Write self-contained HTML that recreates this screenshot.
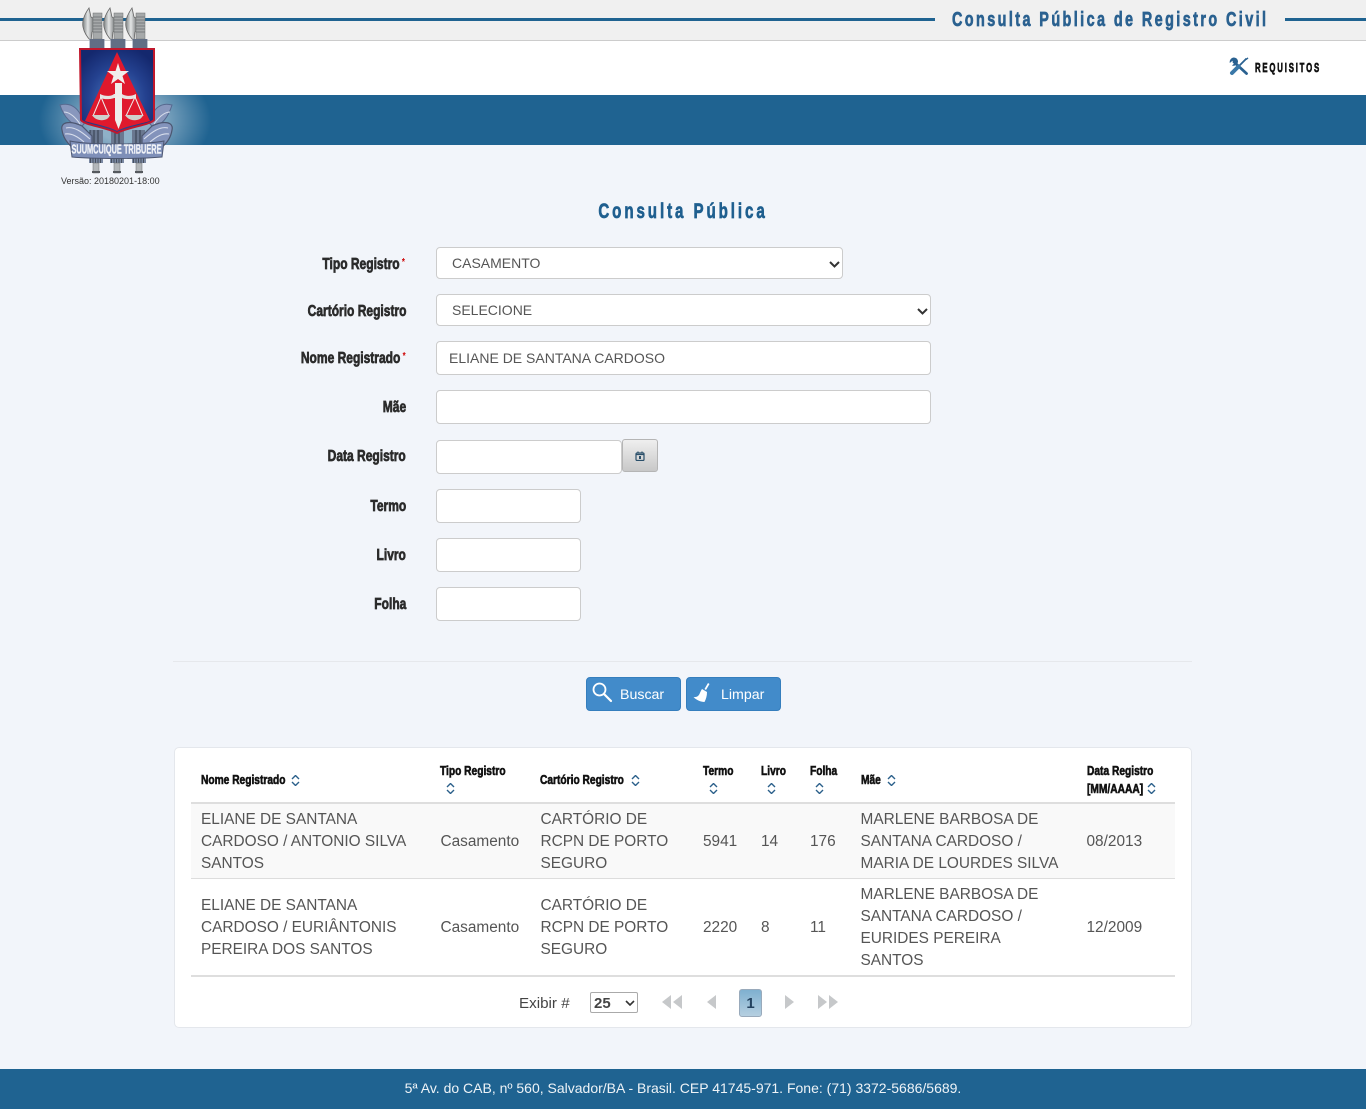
<!DOCTYPE html>
<html lang="pt-BR"><head><meta charset="utf-8"><title>Consulta Pública de Registro Civil</title>
<style>
*{box-sizing:border-box}
html,body{margin:0;padding:0}
body{width:1366px;height:1109px;position:relative;overflow:hidden;background:#f2f5fa;font-family:"Liberation Sans",sans-serif;color:#555;font-size:16px}
.a{position:absolute}
.h{font-family:"Liberation Sans",sans-serif;font-weight:700;-webkit-text-stroke:.7px currentColor;white-space:nowrap}
.lb{position:absolute;right:960px;font-size:15.5px;color:#2b2b2b;line-height:18px;text-align:right;transform:scaleX(.775);transform-origin:100% 50%}
.lb i{position:absolute;font-style:normal;color:#c00;font-size:10px;left:100%;margin-left:3px;top:-2px;-webkit-text-stroke:0}
.lb.s{right:966px}
.in{position:absolute;left:436px;background:#fff;border:1px solid #ccc;border-radius:4px;font-size:14px;color:#555;line-height:33px;padding-left:12px;white-space:nowrap}
.chev{position:absolute;top:13px;width:11px;height:7px}
.th{position:absolute;font-size:13px;line-height:18px;color:#111;-webkit-text-stroke:.6px #111;transform:scaleX(.785);transform-origin:0 50%}
.t{position:absolute;font-size:15.4px;line-height:22px;color:#555;white-space:nowrap}
.btn{position:absolute;top:677px;height:34px;width:95px;border-radius:4px;background:#428bca;border:1px solid #357ebd;color:#fff;font-size:14.2px;line-height:34px}
</style></head><body>

<div class="a" style="left:0;top:0;width:1366px;height:41px;background:#f0f0f0;border-bottom:1px solid #ccc"></div>
<div class="a" style="left:0;top:18px;width:935px;height:3px;background:#1f6391"></div>
<div class="a" style="left:1285px;top:18px;width:81px;height:3px;background:#1f6391"></div>
<div class="a h" style="left:952px;top:9px;font-size:20px;line-height:23px;letter-spacing:3.35px;color:#2a6190;transform:scaleX(.72);transform-origin:0 50%">Consulta Pública de Registro Civil</div>

<div class="a" style="left:0;top:41px;width:1366px;height:54px;background:#fff"></div>
<div class="a" style="left:0;top:95px;width:1366px;height:50px;background:#1f6391"></div>
<div class="a" style="left:0;top:95px;width:230px;height:50px;background:radial-gradient(ellipse 86px 60px at 125px 25px,rgba(255,255,255,.5) 35%,rgba(255,255,255,0) 100%)"></div>

<svg class="a" style="left:1229px;top:57px" width="20" height="19" viewBox="0 0 20 19">
<path d="M5 5 L17.500 16.500" stroke="#2a6190" stroke-width="2.800" stroke-linecap="round"/>
<path d="M5 .5 A4.500 4.500 0 0 0 .8 6 L3.500 3.800 L5.800 6 L3 8.500 A4.500 4.500 0 0 0 9 4 A4.500 4.500 0 0 0 5 .5Z" fill="#2a6190"/>
<path d="M17.500 1.500 L10 9" stroke="#2a6190" stroke-width="1.800"/>
<path d="M18.800 .4 L19.400 1.500 L17.500 3 L16.400 2Z" fill="#2a6190"/>
<path d="M9.500 9.500 L3 16" stroke="#3a78a8" stroke-width="4" stroke-linecap="round"/>
</svg>
<div class="a h" style="left:1255px;top:60px;font-size:13px;line-height:15px;letter-spacing:3px;color:#111;transform:scaleX(.6);transform-origin:0 50%">REQUISITOS</div>

<svg class="a" style="left:55px;top:5px" width="125" height="172" viewBox="55 5 125 172">
<defs>
<radialGradient id="bl" cx=".5" cy=".6" r=".65"><stop offset="0" stop-color="#4a78c0"/><stop offset=".6" stop-color="#24418f"/><stop offset="1" stop-color="#14286e"/></radialGradient>
<linearGradient id="ax" x1="0" x2="1"><stop offset="0" stop-color="#7d8182"/><stop offset=".5" stop-color="#e4e6e6"/><stop offset="1" stop-color="#85898a"/></linearGradient>
<g id="axe">
<path d="M9 3 C4 10 2 17 3 22 C4 27 7 32 11 36 L12 27 L13 26 L13 13 L11 12Z" fill="url(#ax)" stroke="#666" stroke-width=".8"/>
<rect x="13" y="8" width="9" height="26" fill="#a6a9aa" stroke="#6e7273" stroke-width=".5"/>
<path d="M13 12h9M13 15h9M13 18h9M13 21h9M13 24h9M13 27h9" stroke="#6a6e70" stroke-width=".7"/>
<rect x="9.500" y="34" width="15" height="10" fill="#7b89a3"/>
<path d="M11 34v10M13 34v10M15 34v10M17 34v10M19 34v10M21 34v10M23 34v10" stroke="#3b4658" stroke-width=".8"/>
</g>
<g id="bot">
<rect x="0" y="0" width="14" height="6" fill="#7b89a3"/>
<path d="M1.500 0v6M4 0v6M6.500 0v6M9 0v6M11.500 0v6" stroke="#39404c" stroke-width=".8"/>
<rect x="4" y="6" width="6" height="10" fill="#b3b7ba" stroke="#6a6e70" stroke-width=".5"/>
<rect x="3" y="14" width="8" height="2" fill="#55595e"/>
</g>
</defs>
<use href="#axe" x="80" y="5"/><use href="#axe" x="101" y="5"/><use href="#axe" x="123" y="5"/>
<rect x="90" y="130" width="13" height="14" fill="#6a7890"/><rect x="111" y="130" width="13" height="14" fill="#6a7890"/><rect x="132" y="130" width="13" height="14" fill="#6a7890"/>
<path d="M90 130v14M94 130v14M98 130v14M115 130v14M119 130v14M136 130v14M140 130v14" stroke="#333c4c" stroke-width="1"/>
<use href="#bot" x="89" y="157"/><use href="#bot" x="110" y="157"/><use href="#bot" x="132" y="157"/>
<path d="M60 105 C71 102 80 108 84 124 L80 128 C72 124 64 118 60 105Z" fill="#8897bd" stroke="#56698f" stroke-width="1"/>
<path d="M172 105 C161 102 152 108 150 124 L154 128 C162 124 168 118 172 105Z" fill="#8897bd" stroke="#56698f" stroke-width="1"/>
<path d="M62 130 C60 122 70 120 82 126 L92 136 L92 144 L72 147 C66 142 63 137 62 130Z" fill="#8393bb" stroke="#4c5670" stroke-width="1.200"/>
<path d="M172 130 C174 122 164 120 152 126 L142 136 L142 144 L162 147 C168 142 171 137 172 130Z" fill="#8393bb" stroke="#4c5670" stroke-width="1.200"/>
<path d="M66 128C74 126 82 132 90 139M168 128C160 126 152 132 144 139M65 134C72 133 78 137 84 142M169 134C162 133 156 137 150 142M64 112C70 112 76 118 80 124M170 112C164 112 158 118 154 124" stroke="#d8deec" stroke-width="1.100" fill="none"/>
<path d="M70 141 C90 145 142 145 164 141 L162 157 C140 159 92 159 72 157Z" fill="#7e8fb8" stroke="#4c5670" stroke-width="1"/>
<path d="M80 49 H154 V120 C150 125 128 127 117 133 C106 127 84 125 81 120Z" fill="url(#bl)" stroke="#c0172c" stroke-width="2"/>
<path d="M117 52 L150 121 C140 124 126 126 117 131 C108 126 94 124 85 121Z" fill="#e0192d"/>
<path d="M118 63 L120.500 71 L129 71 L122.500 76 L125 84 L118 79 L111 84 L113.500 76 L107 71 L115.500 71Z" fill="#f1eeec"/>
<path d="M100 94 C106 97 112 96 114 94 H122 C125 96 130 97 136 94 V98 C130 100 124 99 122 98 H114 C112 99 106 100 100 98Z" fill="#e6e4e2"/>
<path d="M115 83 H122 V120 L118.500 129 L115 120Z" fill="#efedeb"/>
<path d="M101 97 L93 116 M101 97 L109 116 M135 97 L126 116 M135 97 L143 116" stroke="#eee" stroke-width="1"/>
<path d="M92 115 H110 C108 122 96 122 92 115Z" fill="#cfd0cc"/>
<path d="M125 115 H143 C141 122 129 122 125 115Z" fill="#cfd0cc"/>
<text x="116.500" y="153.500" text-anchor="middle" font-family="Liberation Sans,sans-serif" font-weight="700" font-size="13" fill="#f2f4f8" stroke="#e8ecf4" stroke-width=".4" textLength="90" lengthAdjust="spacingAndGlyphs">SUUMCUIQUE TRIBUERE</text>
</svg>
<div class="a" style="left:61px;top:175px;font-size:9px;line-height:12px;color:#333;white-space:nowrap">Versão: 20180201-18:00</div>

<div class="a h" style="left:0;width:1366px;top:199px;text-align:center;font-size:21px;line-height:25px;letter-spacing:4.05px;color:#1f5f8f;transform:scaleX(.72)">Consulta Pública</div>

<div class="lb h s" style="top:256px">Tipo Registro<i>*</i></div>
<div class="lb h" style="top:303px">Cartório Registro</div>
<div class="lb h s" style="top:350px">Nome Registrado<i>*</i></div>
<div class="lb h" style="top:399px">Mãe</div>
<div class="lb h" style="top:448px">Data Registro</div>
<div class="lb h" style="top:498px">Termo</div>
<div class="lb h" style="top:547px">Livro</div>
<div class="lb h" style="top:596px">Folha</div>

<div class="in" style="top:247px;width:407px;height:32px;padding-left:15px;line-height:31px">CASAMENTO
<svg class="chev" style="left:392px" viewBox="0 0 11 7"><path d="M1 1l4.500 4.500L10 1" fill="none" stroke="#333" stroke-width="2"/></svg></div>
<div class="in" style="top:294px;width:495px;height:32px;padding-left:15px;line-height:31px">SELECIONE
<svg class="chev" style="left:480px" viewBox="0 0 11 7"><path d="M1 1l4.500 4.500L10 1" fill="none" stroke="#333" stroke-width="2"/></svg></div>
<div class="in" style="top:341px;width:495px;height:34px">ELIANE DE SANTANA CARDOSO</div>
<div class="in" style="top:390px;width:495px;height:34px"></div>
<div class="in" style="top:440px;width:186px;height:34px"></div>
<div class="a" style="left:622px;top:439px;width:36px;height:33px;border:1px solid #b5b5b5;border-radius:3px;background:linear-gradient(#efefef,#c8c8c8)"></div>
<svg class="a" style="left:635px;top:451px" width="10" height="10" viewBox="0 0 10 10"><rect x="1" y="2" width="8" height="7.500" rx="1" fill="none" stroke="#2a4f6a" stroke-width="1.200"/><path d="M1 3.500h8M3 .5v2M7 .5v2" stroke="#2a4f6a" stroke-width="1.200"/><rect x="4" y="5" width="2" height="3" fill="#2a4f6a"/></svg>
<div class="in" style="top:489px;width:145px;height:34px"></div>
<div class="in" style="top:538px;width:145px;height:34px"></div>
<div class="in" style="top:587px;width:145px;height:34px"></div>

<div class="a" style="left:173px;top:661px;width:1019px;height:1px;background:#e6e8ec"></div>

<div class="btn" style="left:586px"><span class="a" style="left:33px;top:0">Buscar</span>
<svg class="a" style="left:4px;top:4px" width="22" height="22" viewBox="0 0 22 22"><circle cx="8.500" cy="7.500" r="6" fill="none" stroke="#fff" stroke-width="1.800"/><path d="M13 12l7 7" stroke="#fff" stroke-width="2.200" stroke-linecap="round"/></svg></div>
<div class="btn" style="left:686px"><span class="a" style="left:34px;top:0">Limpar</span>
<svg class="a" style="left:5px;top:4px" width="20" height="22" viewBox="0 0 20 22"><path d="M16 1l1.500 1-3.500 6-1.500-1z" fill="#fff"/><path d="M10 7l5 3c0 4-1 7-2.500 10C9 20 4 18 1.500 15c3 .5 5-1 6-3 .8-2 1.500-3.500 2.500-5z" fill="#fff"/></svg></div>

<div class="a" style="left:174px;top:747px;width:1018px;height:281px;background:#fff;border:1px solid #e4e7ec;border-radius:5px"></div>

<svg width="0" height="0" style="position:absolute"><defs><g id="sort"><path d="M1 4l3.500-3.500L8 4M1 7l3.500 3.500L8 7" fill="none" stroke="#2a5f8a" stroke-width="1.400"/></g></defs></svg>

<div class="th h" style="left:201px;top:771px">Nome Registrado</div>
<svg class="a" style="left:291px;top:775px" width="9" height="11"><use href="#sort"/></svg>
<div class="th h" style="left:440px;top:762px">Tipo Registro</div>
<svg class="a" style="left:446px;top:783px" width="9" height="11"><use href="#sort"/></svg>
<div class="th h" style="left:540px;top:771px">Cartório Registro</div>
<svg class="a" style="left:631px;top:775px" width="9" height="11"><use href="#sort"/></svg>
<div class="th h" style="left:703px;top:762px">Termo</div>
<svg class="a" style="left:709px;top:783px" width="9" height="11"><use href="#sort"/></svg>
<div class="th h" style="left:761px;top:762px">Livro</div>
<svg class="a" style="left:767px;top:783px" width="9" height="11"><use href="#sort"/></svg>
<div class="th h" style="left:810px;top:762px">Folha</div>
<svg class="a" style="left:815px;top:783px" width="9" height="11"><use href="#sort"/></svg>
<div class="th h" style="left:861px;top:771px">Mãe</div>
<svg class="a" style="left:887px;top:775px" width="9" height="11"><use href="#sort"/></svg>
<div class="th h" style="left:1087px;top:762px">Data Registro<br>[MM/AAAA]</div>
<svg class="a" style="left:1147px;top:783px" width="9" height="11"><use href="#sort"/></svg>

<div class="a" style="left:191px;top:802px;width:984px;height:2px;background:#dedede"></div>
<div class="a" style="left:191px;top:804px;width:984px;height:74px;background:#f9f9f9"></div>
<div class="a" style="left:191px;top:878px;width:984px;height:1px;background:#ddd"></div>
<div class="a" style="left:191px;top:975px;width:984px;height:2px;background:#dedede"></div>

<div class="t" style="left:201px;top:809px">ELIANE DE SANTANA<br>CARDOSO / ANTONIO SILVA<br>SANTOS</div>
<div class="t" style="left:440.500px;top:831px">Casamento</div>
<div class="t" style="left:540.500px;top:809px">CARTÓRIO DE<br>RCPN DE PORTO<br>SEGURO</div>
<div class="t" style="left:703px;top:831px">5941</div>
<div class="t" style="left:761px;top:831px">14</div>
<div class="t" style="left:810px;top:831px">176</div>
<div class="t" style="left:860.500px;top:809px">MARLENE BARBOSA DE<br>SANTANA CARDOSO /<br>MARIA DE LOURDES SILVA</div>
<div class="t" style="left:1086.500px;top:831px">08/2013</div>

<div class="t" style="left:201px;top:895px">ELIANE DE SANTANA<br>CARDOSO / EURIÂNTONIS<br>PEREIRA DOS SANTOS</div>
<div class="t" style="left:440.500px;top:917px">Casamento</div>
<div class="t" style="left:540.500px;top:895px">CARTÓRIO DE<br>RCPN DE PORTO<br>SEGURO</div>
<div class="t" style="left:703px;top:917px">2220</div>
<div class="t" style="left:761px;top:917px">8</div>
<div class="t" style="left:810px;top:917px">11</div>
<div class="t" style="left:860.500px;top:884px">MARLENE BARBOSA DE<br>SANTANA CARDOSO /<br>EURIDES PEREIRA<br>SANTOS</div>
<div class="t" style="left:1086.500px;top:917px">12/2009</div>

<div class="a" style="left:519px;top:993px;font-size:15.2px;line-height:21px;color:#444">Exibir #</div>
<div class="a" style="left:590px;top:992px;width:48px;height:21px;background:#fff;border:1px solid #aaa;border-radius:2px;font-size:15px;font-weight:700;color:#444;line-height:21px;padding-left:3px">25
<svg class="a" style="left:34px;top:7px" width="10" height="6" viewBox="0 0 10 6"><path d="M1 1l4 4 4-4" fill="none" stroke="#333" stroke-width="1.600"/></svg></div>
<svg class="a" style="left:660px;top:994px" width="180" height="18" viewBox="0 0 180 18" fill="#c6c8ca">
<path d="M11 1v14L2 8zM22 1v14L13 8z"/>
<path d="M56 1v14L47 8z"/>
<path d="M125 1v14l9-7z"/>
<path d="M158 1v14l9-7zM169 1v14l9-7z"/>
</svg>
<div class="a" style="left:739px;top:989px;width:23px;height:28px;border:1px solid #9ab;border-radius:3px;background:linear-gradient(#7fb0d0,#b5cfe0);color:#24425f;font-size:15px;font-weight:700;text-align:center;line-height:27px">1</div>

<div class="a" style="left:0;top:1069px;width:1366px;height:40px;background:#1f6391;color:#eef3f7;font-size:14px;line-height:39px;text-align:center">5ª Av. do CAB, nº 560, Salvador/BA - Brasil. CEP 41745-971. Fone: (71) 3372-5686/5689.</div>
</body></html>
